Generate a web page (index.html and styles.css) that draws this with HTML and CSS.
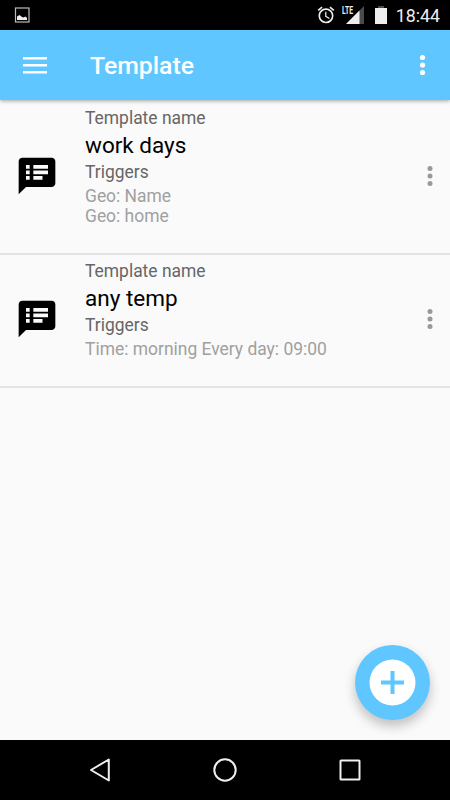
FILE: index.html
```html
<!DOCTYPE html>
<html>
<head>
    <meta charset="utf-8">
    <title>Template</title>
    <link rel="stylesheet" href="styles.css">
</head>
<body>
    <div class="screen">
        <div class="status-bar">
            <svg class="picture" width="16" height="16" viewBox="0 0 16 16">
                <rect x="1.500" y="1" width="13.500" height="14" fill="none" stroke="#bbb" stroke-width="1.200"/>
                <path d="M3 13V9.500L5.500 8 8 10l1.500.5L11.500 9.500 13 11v2z" fill="#eee"/>
            </svg>
            <div class="status-icons">
                <svg class="alarm" width="20" height="20" viewBox="0 0 24 24">
                    <path fill="#eee" d="M22 5.720l-4.600-3.860-1.290 1.530 4.600 3.860L22 5.720zM7.880 3.390L6.600 1.860 2 5.710l1.290 1.530 4.590-3.850zM12.500 8H11v6l4.750 2.850.75-1.230-4-2.370V8zM12 4c-4.970 0-9 4.030-9 9s4.020 9 9 9a9 9 0 0 0 0-18zm0 16c-3.870 0-7-3.130-7-7s3.130-7 7-7 7 3.130 7 7-3.130 7-7 7z"/>
                </svg>
                <div class="signal">
                    <span class="lte">LTE</span>
                    <svg width="18" height="18" viewBox="0 0 18 18">
                        <path d="M0 18L18 0v18z" fill="#4a4a4a"/>
                        <path d="M0 18L13.500 4.500V18z" fill="#eee"/>
                    </svg>
                </div>
                <svg class="battery" width="12" height="18" viewBox="0 0 12 18">
                    <path d="M3 0h6v2h3v1H0V2h3z" fill="#4a4a4a"/>
                    <rect y="2" width="12" height="16" fill="#eee"/>
                </svg>
                <span class="clock">18:44</span>
            </div>
        </div>

        <div class="app-bar">
            <svg class="menu" width="24" height="17" viewBox="0 0 24 17">
                <path d="M0 0h24v2.500H0zM0 7h24v2.500H0zM0 14h24v2.500H0z" fill="#fff"/>
            </svg>
            <h1>Template</h1>
            <svg class="more" width="6" height="20" viewBox="0 0 6 20">
                <circle cx="2.500" cy="2.500" r="2.600"/>
                <circle cx="2.500" cy="10" r="2.600"/>
                <circle cx="2.500" cy="17.500" r="2.600"/>
            </svg>
        </div>

        <div class="list">
            <div class="item">
                <svg class="note" width="44" height="44" viewBox="0 0 24 24">
                    <path d="M20 2H4c-1.100 0-1.990.9-1.990 2L2 22l4-4h14c1.100 0 2-.9 2-2V4c0-1.100-.9-2-2-2zM8 14H6v-2h2v2zm0-3H6V9h2v2zm0-3H6V6h2v2zm7 6h-5v-2h5v2zm3-3h-8V9h8v2zm0-3h-8V6h8v2z"/>
                </svg>
                <div class="text">
                    <div class="label">Template name</div>
                    <div class="name">work days</div>
                    <div class="label">Triggers</div>
                    <div class="triggers">Geo: Name<br>Geo: home</div>
                </div>
                <svg class="more" width="6" height="20" viewBox="0 0 6 20">
                    <circle cx="3" cy="2.500" r="2.500"/>
                    <circle cx="3" cy="10" r="2.500"/>
                    <circle cx="3" cy="17.500" r="2.500"/>
                </svg>
            </div>
            <div class="item">
                <svg class="note" width="44" height="44" viewBox="0 0 24 24">
                    <path d="M20 2H4c-1.100 0-1.990.9-1.990 2L2 22l4-4h14c1.100 0 2-.9 2-2V4c0-1.100-.9-2-2-2zM8 14H6v-2h2v2zm0-3H6V9h2v2zm0-3H6V6h2v2zm7 6h-5v-2h5v2zm3-3h-8V9h8v2zm0-3h-8V6h8v2z"/>
                </svg>
                <div class="text">
                    <div class="label">Template name</div>
                    <div class="name">any temp</div>
                    <div class="label">Triggers</div>
                    <div class="triggers">Time: morning Every day: 09:00</div>
                </div>
                <svg class="more" width="6" height="20" viewBox="0 0 6 20">
                    <circle cx="3" cy="2.500" r="2.500"/>
                    <circle cx="3" cy="10" r="2.500"/>
                    <circle cx="3" cy="17.500" r="2.500"/>
                </svg>
            </div>
        </div>

        <div class="fab">
            <svg width="46" height="46" viewBox="0 0 46 46">
                <circle cx="22.500" cy="22.500" r="23" fill="#fff"/>
                <path d="M20.500 11h4v9.500H34v4h-9.500V34h-4v-9.500H11v-4h9.500z" fill="#60c6ff"/>
            </svg>
        </div>

        <div class="nav-bar">
            <svg width="24" height="24" viewBox="0 0 24 24">
                <path d="M3 12L20.800 1.500v21z"/>
            </svg>
            <svg width="24" height="24" viewBox="0 0 24 24">
                <circle cx="12" cy="12" r="10.700"/>
            </svg>
            <svg width="24" height="24" viewBox="0 0 24 24">
                <rect x="2.500" y="2.500" width="19" height="19" rx=".5"/>
            </svg>
        </div>
    </div>
</body>
</html>
```

FILE: styles.css
```css
body {
    margin: 0;
    font-family: Roboto, sans-serif;
}
svg {
    display: block;
    flex: none;
    overflow: visible;
}
.screen {
    position: relative;
    display: flex;
    flex-direction: column;
    width: 450px;
    height: 800px;
    overflow: hidden;
    background: #fafafa;
}
.status-bar {
    display: flex;
    justify-content: space-between;
    align-items: center;
    height: 30px;
    padding: 0 10px 0 14px;
    background: #000;
    color: #eee;
}
.status-icons {
    display: flex;
    align-items: center;
}
.alarm {
    margin-right: -1px;
}
.signal {
    display: flex;
    align-items: flex-end;
    position: relative;
    width: 23px;
    height: 18px;
    margin-left: 6px;
    justify-content: flex-end;
}
.lte {
    position: absolute;
    left: 1px;
    top: -1px;
    font-size: 11px;
    line-height: 11px;
    font-weight: bold;
    transform: scaleX(0.62);
    transform-origin: left;
}
.battery {
    margin-left: 11px;
}
.clock {
    margin-left: 9px;
    font-size: 17.8px;
    line-height: 30px;
    padding-top: 1px;
}
.app-bar {
    display: flex;
    align-items: center;
    height: 70px;
    padding: 0 24px 0 23px;
    background: #60c6ff;
    box-shadow: 0 1px 4px rgba(0, 0, 0, 0.35);
    color: #fff;
    z-index: 1;
}
.app-bar h1 {
    flex: 1;
    margin: 0 0 0 43px;
    padding-top: 2px;
    font-size: 24.8px;
    line-height: 30px;
    font-weight: 500;
}
.more {
    fill: #999;
}
.app-bar .more {
    fill: #fff;
}
.list {
    flex: 1;
    padding-top: 1px;
}
.item {
    display: flex;
    align-items: center;
    padding: 7px 17px 27px 15px;
    border-bottom: 2px solid #e3e3e3;
}
.item + .item {
    padding-top: 6px;
}
.item .note,
.item .more {
    margin-top: 18px;
}
.text {
    flex: 1;
    margin-left: 26px;
}
.label {
    font-size: 17.45px;
    line-height: 20px;
    color: #666;
}
.name {
    font-size: 22.5px;
    line-height: 34px;
    color: #000;
}
.triggers {
    margin-top: 4px;
    font-size: 17.45px;
    line-height: 20px;
    color: #a0a0a0;
}
.fab {
    position: absolute;
    right: 20px;
    bottom: 80px;
    display: flex;
    align-items: center;
    justify-content: center;
    width: 75px;
    height: 75px;
    border-radius: 50%;
    background: #60c6ff;
    box-shadow: 0 6px 12px rgba(0, 0, 0, 0.24);
}
.nav-bar {
    display: flex;
    align-items: center;
    justify-content: center;
    gap: 101px;
    height: 60px;
    background: #000;
}
.nav-bar svg {
    fill: none;
    stroke: #eee;
    stroke-width: 2;
    stroke-linejoin: round;
}
```
